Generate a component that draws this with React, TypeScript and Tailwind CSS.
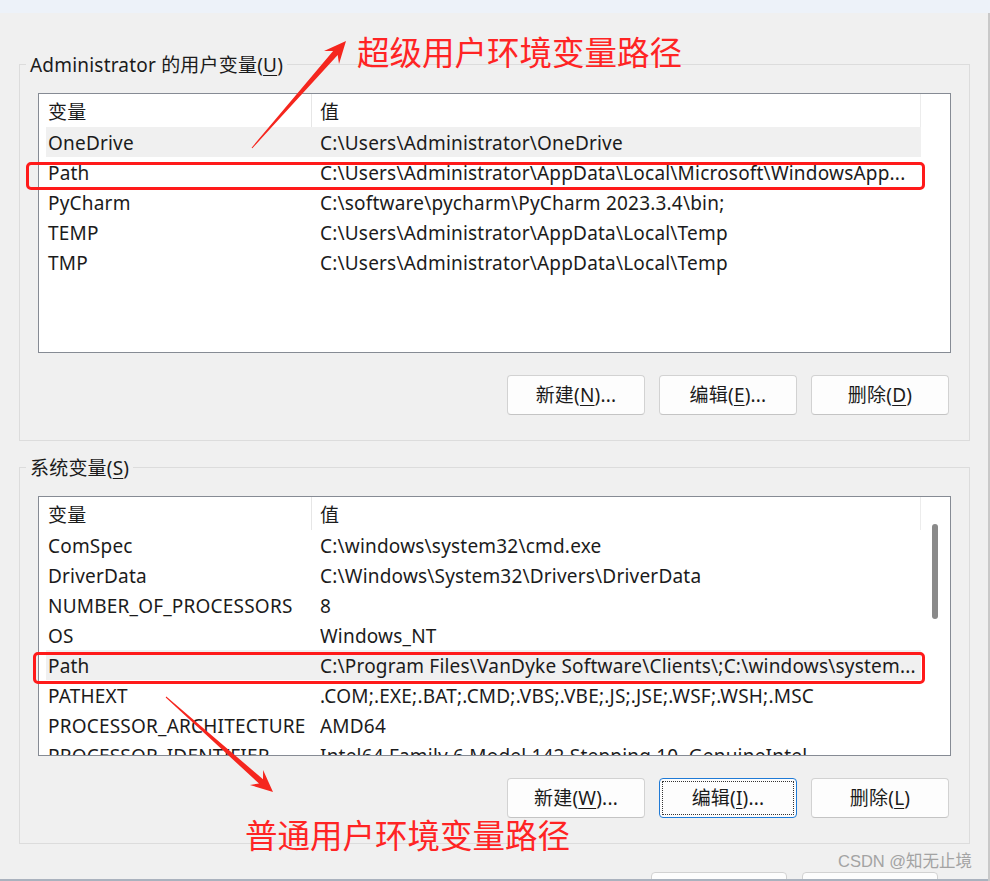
import React from "react";

type Row = { name: string; value: string; sel?: boolean };

const userRows: Row[] = [
  { name: "OneDrive", value: "C:\\Users\\Administrator\\OneDrive", sel: true },
  { name: "Path", value: "C:\\Users\\Administrator\\AppData\\Local\\Microsoft\\WindowsApp..." },
  { name: "PyCharm", value: "C:\\software\\pycharm\\PyCharm 2023.3.4\\bin;" },
  { name: "TEMP", value: "C:\\Users\\Administrator\\AppData\\Local\\Temp" },
  { name: "TMP", value: "C:\\Users\\Administrator\\AppData\\Local\\Temp" },
];

const sysRows: Row[] = [
  { name: "ComSpec", value: "C:\\windows\\system32\\cmd.exe" },
  { name: "DriverData", value: "C:\\Windows\\System32\\Drivers\\DriverData" },
  { name: "NUMBER_OF_PROCESSORS", value: "8" },
  { name: "OS", value: "Windows_NT" },
  { name: "Path", value: "C:\\Program Files\\VanDyke Software\\Clients\\;C:\\windows\\system...", sel: true },
  { name: "PATHEXT", value: ".COM;.EXE;.BAT;.CMD;.VBS;.VBE;.JS;.JSE;.WSF;.WSH;.MSC" },
  { name: "PROCESSOR_ARCHITECTURE", value: "AMD64" },
  { name: "PROCESSOR_IDENTIFIER", value: "Intel64 Family 6 Model 142 Stepping 10, GenuineIntel" },
];

function ListBox({ rows, scroll }: { rows: Row[]; scroll?: boolean }) {
  return (
    <div className="ml-[18px] w-[913px] h-[260px] border border-[#868b94] bg-white flex overflow-hidden">
      <div className="flex-1 flex flex-col pl-[7px] overflow-hidden">
        <div className="flex h-[33px] shrink-0 items-center border-r border-[#ececec]">
          <div className="w-[266px] h-full flex items-center pl-[2px] pt-[4px] border-r border-[#e6e6e6]">变量</div>
          <div className="pl-[8px] pt-[4px]">值</div>
        </div>
        {rows.map((r, i) => (
          <div
            key={i}
            className={
              "flex h-[30px] pt-[3px] shrink-0 items-center whitespace-nowrap " +
              (r.sel ? "bg-[#f0f0f0]" : "")
            }
          >
            <div className="w-[274px] pl-[2px] shrink-0">{r.name}</div>
            <div className="overflow-hidden">{r.value}</div>
          </div>
        ))}
      </div>
      <div className="w-[29px] shrink-0">
        {scroll && <div className="mt-[27px] ml-[11px] w-[6px] h-[95px] rounded-full bg-[#8a8a8a]" />}
      </div>
    </div>
  );
}

function Btn({ children, focus }: { children: React.ReactNode; focus?: boolean }) {
  return (
    <div
      className={
        "w-[138px] h-[40px] rounded-[4px] border flex items-center justify-center text-[19px] " +
        (focus
          ? "border-[#1f7ad6] bg-[#fdfdfd] outline-1 outline-dotted outline-[#333] outline-offset-[-4px]"
          : "border-[#d2d2d2] border-b-[#c4c4c4] bg-[#fdfdfd]")
      }
    >
      {children}
    </div>
  );
}

function U({ c }: { c: string }) {
  return <span className="underline underline-offset-[3px] decoration-1">{c}</span>;
}

function Group({
  title,
  rows,
  scroll,
  buttons,
  className,
}: {
  title: React.ReactNode;
  rows: Row[];
  scroll?: boolean;
  buttons: React.ReactNode;
  className: string;
}) {
  return (
    <div className={"w-[951px] h-[377px] border border-[#dcdcdc] flex flex-col " + className}>
      <div className="-mt-[13px] ml-[6px] px-[4px] w-fit bg-[#f0f0f0] leading-[26px] text-[19px]">{title}</div>
      <div className="mt-[15px]">
        <ListBox rows={rows} scroll={scroll} />
      </div>
      <div className="mt-[22px] flex justify-end gap-[14px] mr-[20px]">{buttons}</div>
    </div>
  );
}

export default function App() {
  return (
    <div className="w-[990px] h-[881px] overflow-hidden bg-[#f0f0f0] relative flex flex-col text-[19px] tracking-[0.2px] text-[#1b1b1b] font-['Noto_Sans','Noto_Sans_CJK_SC',sans-serif]">
      <div className="h-[13px] shrink-0 bg-[#edf2f9]" />
      <div className="flex flex-1">
        <div className="flex-1 flex flex-col pl-[19px]">
          <Group
            className="mt-[51px]"
            title={
              <>
                Administrator 的用户变量(<U c="U" />)
              </>
            }
            rows={userRows}
            buttons={
              <>
                <Btn>
                  新建(<U c="N" />)...
                </Btn>
                <Btn>
                  编辑(<U c="E" />)...
                </Btn>
                <Btn>
                  删除(<U c="D" />)
                </Btn>
              </>
            }
          />
          <Group
            className="mt-[26px]"
            title={
              <>
                系统变量(<U c="S" />)
              </>
            }
            rows={sysRows}
            scroll
            buttons={
              <>
                <Btn>
                  新建(<U c="W" />)...
                </Btn>
                <Btn focus>
                  编辑(<U c="I" />)...
                </Btn>
                <Btn>
                  删除(<U c="L" />)
                </Btn>
              </>
            }
          />
          <div className="mt-[28px] h-[7px] overflow-hidden flex justify-end gap-[15px] pr-[50px]">
            <div className="w-[136px] h-[40px] rounded-[4px] border border-[#d2d2d2] bg-[#fdfdfd]" />
            <div className="w-[136px] h-[40px] rounded-[4px] border border-[#d2d2d2] bg-[#fdfdfd]" />
          </div>
          <div className="-ml-[19px] h-[2px] bg-[#aab2be]" />
        </div>
        <div className="w-[2px] bg-[#c9c9c9]" />
      </div>

      {/* annotations */}
      <div className="absolute left-[26px] top-[162px] w-[899px] h-[28px] border-[3px] border-[#ff1a1a] rounded-[5px]" />
      <div className="absolute left-[33px] top-[652px] w-[892px] h-[32px] border-[3px] border-[#ff1a1a] rounded-[5px]" />
      <div className="absolute left-[357px] top-[34px] text-[32.5px] tracking-normal leading-[34px] text-[#ff2424] whitespace-nowrap font-['Noto_Sans_CJK_SC',sans-serif]">
        超级用户环境变量路径
      </div>
      <div className="absolute left-[245px] top-[817px] text-[32.5px] tracking-normal leading-[34px] text-[#ff2424] whitespace-nowrap font-['Noto_Sans_CJK_SC',sans-serif]">
        普通用户环境变量路径
      </div>
      <svg className="absolute left-0 top-0 pointer-events-none" width="990" height="881">
        <polygon
          fill="#f5261e"
          points="251.6,147.7 333.1,51 324,50.9 346,41 339,64.1 337.7,55 252.4,148.3"
        />
        <polygon
          fill="#f5261e"
          points="165.7,697.4 259,783.6 249.9,784.9 273,792 263.1,769.9 263,779.2 166.3,696.6"
        />
      </svg>
      <div className="absolute left-[838px] top-[850px] text-[16.5px] tracking-normal leading-[22px] text-[#a3a3a3] whitespace-nowrap font-['Liberation_Sans','Noto_Sans_CJK_SC',sans-serif]">
        CSDN @知无止境
      </div>
    </div>
  );
}
